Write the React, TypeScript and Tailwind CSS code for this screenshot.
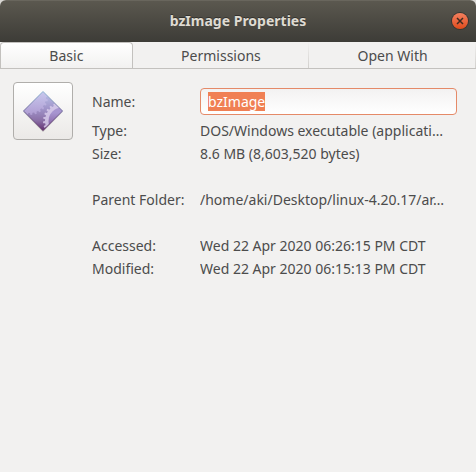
import { useEffect, useRef } from "react";

const tabs = ["Basic", "Permissions", "Open With"];

const groups = [
  [
    { label: "Type:", value: "DOS/Windows executable (applicati…" },
    { label: "Size:", value: "8.6 MB (8,603,520 bytes)" },
  ],
  [{ label: "Parent Folder:", value: "/home/aki/Desktop/linux-4.20.17/ar…" }],
  [
    { label: "Accessed:", value: "Wed 22 Apr 2020 06:26:15 PM CDT" },
    { label: "Modified:", value: "Wed 22 Apr 2020 06:15:13 PM CDT" },
  ],
];

function gearPath(cx: number, cy: number, r: number, teeth: number, depth: number) {
  const points: string[] = [];
  const step = (Math.PI * 2) / teeth;
  for (let i = 0; i < teeth; i++) {
    for (const [offset, radius] of [
      [0, r],
      [0.42, r],
      [0.52, r + depth],
      [0.9, r + depth],
    ]) {
      const a = (i + offset) * step;
      points.push(`${(cx + radius * Math.cos(a)).toFixed(2)} ${(cy + radius * Math.sin(a)).toFixed(2)}`);
    }
  }
  return `M${points.join("L")}Z`;
}

function ExecutableIcon() {
  return (
    <svg viewBox="0 0 48 48" className="size-12" aria-hidden="true">
      <defs>
        <linearGradient id="face" x1="0" y1="0" x2="0" y2="1">
          <stop offset="0" stopColor="#b9c3ea" />
          <stop offset="0.45" stopColor="#a093c8" />
          <stop offset="0.75" stopColor="#8a6fa6" />
          <stop offset="1" stopColor="#632f70" />
        </linearGradient>
        <linearGradient id="rim" x1="0" y1="0" x2="0" y2="1">
          <stop offset="0" stopColor="#91b9d4" />
          <stop offset="0.5" stopColor="#77709f" />
          <stop offset="1" stopColor="#5c2a62" />
        </linearGradient>
        <linearGradient id="gearLight" x1="0" y1="0" x2="0" y2="1">
          <stop offset="0" stopColor="#d9defa" />
          <stop offset="1" stopColor="#b7a5da" />
        </linearGradient>
        <linearGradient id="gearCore" x1="0" y1="0" x2="0" y2="1">
          <stop offset="0.2" stopColor="#a795d0" />
          <stop offset="0.7" stopColor="#8560a2" />
        </linearGradient>
        <clipPath id="diamond">
          <path d="M24 4.5 43.5 24 24 43.5 4.5 24Z" />
        </clipPath>
      </defs>
      <path d="M24 5.5 43.5 25 24 45 4.5 25Z" fill="#000" opacity="0.2" />
      <path d="M24 4.5 43.5 24 24 43.5 4.5 24Z" fill="url(#face)" />
      <g clipPath="url(#diamond)">
        <path d={gearPath(11, 10, 16, 24, 2)} fill="url(#gearLight)" opacity="0.75" />
        <path d={gearPath(43, 34, 17, 26, 2)} fill="#d8cbeb" opacity="0.85" />
        <circle cx="43" cy="34" r="13.5" fill="url(#gearCore)" />
      </g>
      <path
        d="M24 4.5 43.5 24 24 43.5 4.5 24Z"
        fill="none"
        stroke="url(#rim)"
        strokeWidth="1"
        strokeLinejoin="round"
      />
    </svg>
  );
}

export default function App() {
  const nameRef = useRef<HTMLInputElement>(null);

  useEffect(() => {
    nameRef.current?.focus();
    nameRef.current?.select();
  }, []);

  return (
    <div className="bg-[#d9d7d3] font-['Noto_Sans','Open_Sans',sans-serif] text-sm text-[#4c4c4c]">
      <div className="flex min-h-screen flex-col overflow-hidden rounded-t-md bg-[#f2f1f0]">
        <header className="grid h-[42px] grid-cols-[1fr_auto_1fr] items-center border-t border-[#69665d] bg-linear-to-b from-[#5b584f] to-[#3d3c37] px-2 pb-px">
          <h1 className="col-start-2 text-sm font-bold text-[#dfdbd2] [text-shadow:0_-1px_0_#33322e]">
            bzImage Properties
          </h1>
          <button
            type="button"
            aria-label="Close"
            className="flex size-4 items-center justify-center justify-self-end rounded-full bg-linear-to-b from-[#f37f5d] to-[#df4a16] text-[#3c2a20] shadow-[0_0_0_1px_#383530]"
          >
            <svg viewBox="0 0 8 8" className="size-2" stroke="currentColor" strokeWidth="1.5">
              <path d="M1 1 7 7M7 1 1 7" />
            </svg>
          </button>
        </header>

        <div role="tablist" className="flex h-[27px] border-b border-[#c3c1be]">
          {tabs.map((tab, i) => (
            <button
              key={tab}
              type="button"
              role="tab"
              aria-selected={i === 0}
              className={
                i === 0
                  ? "flex-auto rounded-t border border-b-0 border-[#c3c1be] bg-linear-to-b from-white to-[#f2f1f0]"
                  : "flex-auto bg-linear-to-b from-[#f2f1f0] to-[#d2d0cd] bg-[length:1px_100%] bg-right bg-no-repeat pt-px"
              }
            >
              {tab}
            </button>
          ))}
        </div>

        <main className="flex items-start gap-[19px] py-[13px] pr-[19px] pl-[13px]">
          <button
            type="button"
            aria-label="Change icon"
            className="flex h-[58px] w-[60px] shrink-0 items-center justify-center rounded border border-[#b0aeab] bg-linear-to-b from-white to-[#ebe9e7]"
          >
            <ExecutableIcon />
          </button>

          <div className="min-w-0 flex-1 pt-[6px]">
            <div className="grid grid-cols-[108px_1fr] items-center">
              <label htmlFor="name">Name:</label>
              <input
                id="name"
                ref={nameRef}
                type="text"
                defaultValue="bzImage"
                className="h-[27px] w-full min-w-0 rounded border border-[#e58a68] bg-linear-to-b from-[#f3f2f2] to-white px-[7px] outline-none selection:bg-[#f08054] selection:text-white"
              />
            </div>
            <dl className="flex flex-col gap-[23px] pt-1 leading-[23px]">
              {groups.map((rows) => (
                <div key={rows[0].label}>
                  {rows.map((row) => (
                    <div key={row.label} className="grid grid-cols-[108px_1fr]">
                      <dt className="whitespace-nowrap">{row.label}</dt>
                      <dd className="truncate">{row.value}</dd>
                    </div>
                  ))}
                </div>
              ))}
            </dl>
          </div>
        </main>
      </div>
    </div>
  );
}
